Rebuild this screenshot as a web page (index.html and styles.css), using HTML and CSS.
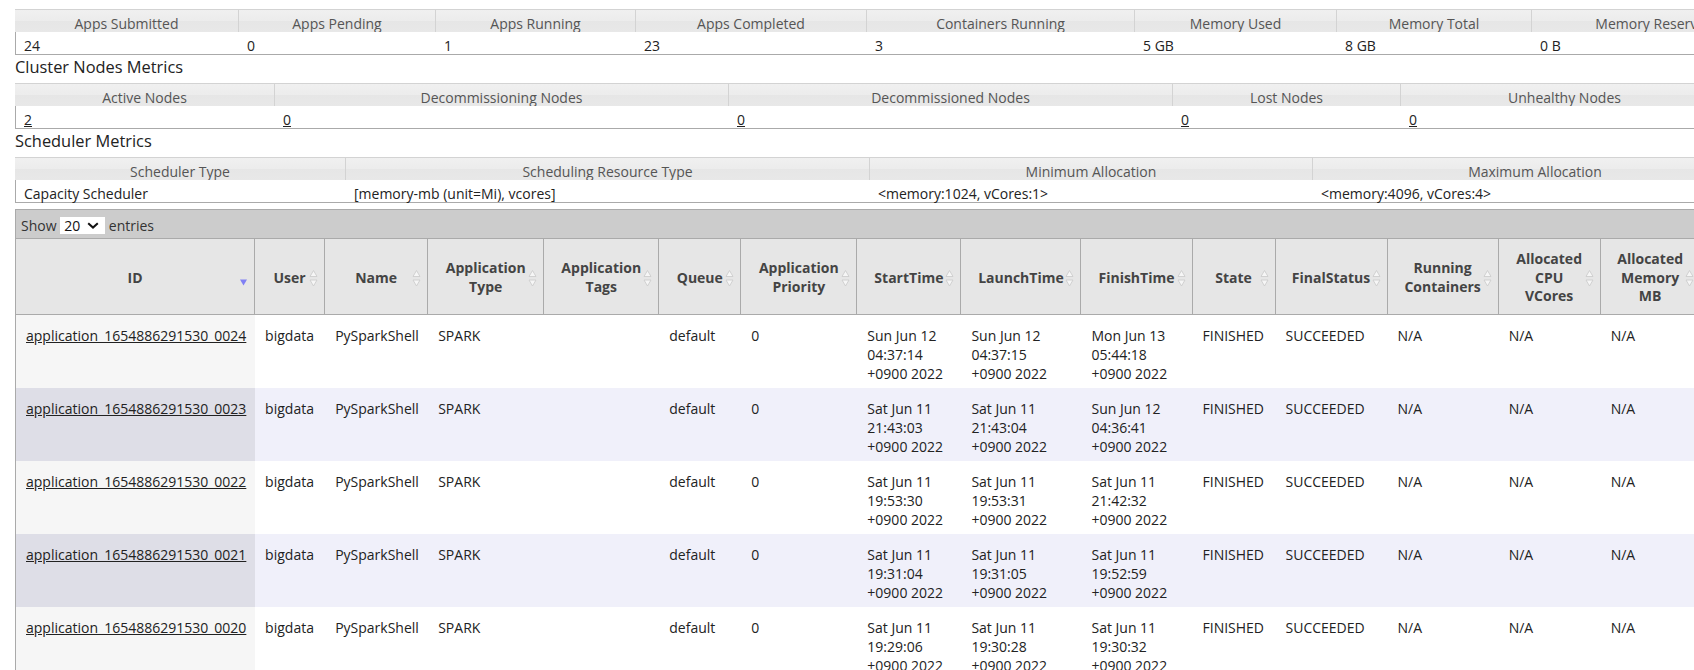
FILE: index.html
```html
<!DOCTYPE html>
<html>
<head>
<meta charset="utf-8">
<title>All Applications</title>
<link rel="stylesheet" href="styles.css">
</head>
<body>
<div class="page">
  <table class="metrics m-apps">
    <colgroup><col><col><col><col><col><col><col><col><col><col><col></colgroup>
    <thead>
      <tr>
        <th>Apps Submitted</th><th>Apps Pending</th><th>Apps Running</th><th>Apps Completed</th><th>Containers Running</th><th>Memory Used</th><th>Memory Total</th><th>Memory Reserved</th><th>VCores Used</th><th>VCores Total</th><th>VCores Reserved</th>
      </tr>
    </thead>
    <tbody>
      <tr>
        <td>24</td><td>0</td><td>1</td><td>23</td><td>3</td><td>5 GB</td><td>8 GB</td><td>0 B</td><td>3</td><td>16</td><td>0</td>
      </tr>
    </tbody>
  </table>

  <h3 class="section-title">Cluster Nodes Metrics</h3>
  <table class="metrics m-nodes">
    <colgroup><col><col><col><col><col><col><col></colgroup>
    <thead>
      <tr>
        <th>Active Nodes</th><th>Decommissioning Nodes</th><th>Decommissioned Nodes</th><th>Lost Nodes</th><th>Unhealthy Nodes</th><th>Rebooted Nodes</th><th>Shutdown Nodes</th>
      </tr>
    </thead>
    <tbody>
      <tr>
        <td><a href="#">2</a></td><td><a href="#">0</a></td><td><a href="#">0</a></td><td><a href="#">0</a></td><td><a href="#">0</a></td><td><a href="#">0</a></td><td><a href="#">0</a></td>
      </tr>
    </tbody>
  </table>

  <h3 class="section-title">Scheduler Metrics</h3>
  <table class="metrics m-sched">
    <colgroup><col><col><col><col><col></colgroup>
    <thead>
      <tr>
        <th>Scheduler Type</th><th>Scheduling Resource Type</th><th>Minimum Allocation</th><th>Maximum Allocation</th><th>Maximum Cluster Application Priority</th>
      </tr>
    </thead>
    <tbody>
      <tr>
        <td>Capacity Scheduler</td><td>[memory-mb (unit=Mi), vcores]</td><td>&lt;memory:1024, vCores:1&gt;</td><td>&lt;memory:4096, vCores:4&gt;</td><td>0</td>
      </tr>
    </tbody>
  </table>

  <div class="dt-wrapper">
    <div class="dt-toolbar">
      <label>Show <span class="len-wrap"><select class="len"><option>20</option><option>40</option><option>60</option></select><svg class="chev" width="12" height="7" viewBox="0 0 12 7"><path d="M1.2 1.2 L6 5.6 L10.8 1.2" fill="none" stroke="#111" stroke-width="2"/></svg></span> entries</label>
    </div>
    <table class="apps">
      <colgroup><col><col><col><col><col><col><col><col><col><col><col><col><col><col><col><col><col><col><col><col></colgroup>
      <thead>
        <tr>
          <th>ID<svg class="sort" width="9" height="19" viewBox="0 0 9 19"><path d="M1 10.5 H8 L4.5 16.5 Z" fill="#8080f4"/></svg></th>
          <th>User<svg class="sort" width="9" height="19" viewBox="0 0 9 19"><path d="M4.5 1.5 L8 7.5 H1 Z M1 11 H8 L4.5 17 Z" fill="#f6f6f6" stroke="#c9c9c9" stroke-width="0.8"/></svg></th>
          <th>Name<svg class="sort" width="9" height="19" viewBox="0 0 9 19"><path d="M4.5 1.5 L8 7.5 H1 Z M1 11 H8 L4.5 17 Z" fill="#f6f6f6" stroke="#c9c9c9" stroke-width="0.8"/></svg></th>
          <th>Application Type<svg class="sort" width="9" height="19" viewBox="0 0 9 19"><path d="M4.5 1.5 L8 7.5 H1 Z M1 11 H8 L4.5 17 Z" fill="#f6f6f6" stroke="#c9c9c9" stroke-width="0.8"/></svg></th>
          <th>Application Tags<svg class="sort" width="9" height="19" viewBox="0 0 9 19"><path d="M4.5 1.5 L8 7.5 H1 Z M1 11 H8 L4.5 17 Z" fill="#f6f6f6" stroke="#c9c9c9" stroke-width="0.8"/></svg></th>
          <th>Queue<svg class="sort" width="9" height="19" viewBox="0 0 9 19"><path d="M4.5 1.5 L8 7.5 H1 Z M1 11 H8 L4.5 17 Z" fill="#f6f6f6" stroke="#c9c9c9" stroke-width="0.8"/></svg></th>
          <th>Application Priority<svg class="sort" width="9" height="19" viewBox="0 0 9 19"><path d="M4.5 1.5 L8 7.5 H1 Z M1 11 H8 L4.5 17 Z" fill="#f6f6f6" stroke="#c9c9c9" stroke-width="0.8"/></svg></th>
          <th>StartTime<svg class="sort" width="9" height="19" viewBox="0 0 9 19"><path d="M4.5 1.5 L8 7.5 H1 Z M1 11 H8 L4.5 17 Z" fill="#f6f6f6" stroke="#c9c9c9" stroke-width="0.8"/></svg></th>
          <th>LaunchTime<svg class="sort" width="9" height="19" viewBox="0 0 9 19"><path d="M4.5 1.5 L8 7.5 H1 Z M1 11 H8 L4.5 17 Z" fill="#f6f6f6" stroke="#c9c9c9" stroke-width="0.8"/></svg></th>
          <th>FinishTime<svg class="sort" width="9" height="19" viewBox="0 0 9 19"><path d="M4.5 1.5 L8 7.5 H1 Z M1 11 H8 L4.5 17 Z" fill="#f6f6f6" stroke="#c9c9c9" stroke-width="0.8"/></svg></th>
          <th>State<svg class="sort" width="9" height="19" viewBox="0 0 9 19"><path d="M4.5 1.5 L8 7.5 H1 Z M1 11 H8 L4.5 17 Z" fill="#f6f6f6" stroke="#c9c9c9" stroke-width="0.8"/></svg></th>
          <th>FinalStatus<svg class="sort" width="9" height="19" viewBox="0 0 9 19"><path d="M4.5 1.5 L8 7.5 H1 Z M1 11 H8 L4.5 17 Z" fill="#f6f6f6" stroke="#c9c9c9" stroke-width="0.8"/></svg></th>
          <th>Running Containers<svg class="sort" width="9" height="19" viewBox="0 0 9 19"><path d="M4.5 1.5 L8 7.5 H1 Z M1 11 H8 L4.5 17 Z" fill="#f6f6f6" stroke="#c9c9c9" stroke-width="0.8"/></svg></th>
          <th>Allocated CPU VCores<svg class="sort" width="9" height="19" viewBox="0 0 9 19"><path d="M4.5 1.5 L8 7.5 H1 Z M1 11 H8 L4.5 17 Z" fill="#f6f6f6" stroke="#c9c9c9" stroke-width="0.8"/></svg></th>
          <th>Allocated Memory MB<svg class="sort" width="9" height="19" viewBox="0 0 9 19"><path d="M4.5 1.5 L8 7.5 H1 Z M1 11 H8 L4.5 17 Z" fill="#f6f6f6" stroke="#c9c9c9" stroke-width="0.8"/></svg></th>
          <th>% of Queue</th>
          <th>% of Cluster</th>
          <th>Progress</th>
          <th>Tracking UI</th>
          <th>Blacklisted Nodes</th>
        </tr>
      </thead>
      <tbody>
        <tr class="odd">
          <td class="sorted"><a href="#">application_1654886291530_0024</a></td><td>bigdata</td><td>PySparkShell</td><td>SPARK</td><td></td><td>default</td><td>0</td>
          <td>Sun Jun 12 04:37:14 +0900 2022</td><td>Sun Jun 12 04:37:15 +0900 2022</td><td>Mon Jun 13 05:44:18 +0900 2022</td>
          <td>FINISHED</td><td>SUCCEEDED</td><td>N/A</td><td>N/A</td><td>N/A</td><td>0.0</td><td>0.0</td><td></td><td><a href="#">History</a></td><td>N/A</td>
        </tr>
        <tr class="even">
          <td class="sorted"><a href="#">application_1654886291530_0023</a></td><td>bigdata</td><td>PySparkShell</td><td>SPARK</td><td></td><td>default</td><td>0</td>
          <td>Sat Jun 11 21:43:03 +0900 2022</td><td>Sat Jun 11 21:43:04 +0900 2022</td><td>Sun Jun 12 04:36:41 +0900 2022</td>
          <td>FINISHED</td><td>SUCCEEDED</td><td>N/A</td><td>N/A</td><td>N/A</td><td>0.0</td><td>0.0</td><td></td><td><a href="#">History</a></td><td>N/A</td>
        </tr>
        <tr class="odd">
          <td class="sorted"><a href="#">application_1654886291530_0022</a></td><td>bigdata</td><td>PySparkShell</td><td>SPARK</td><td></td><td>default</td><td>0</td>
          <td>Sat Jun 11 19:53:30 +0900 2022</td><td>Sat Jun 11 19:53:31 +0900 2022</td><td>Sat Jun 11 21:42:32 +0900 2022</td>
          <td>FINISHED</td><td>SUCCEEDED</td><td>N/A</td><td>N/A</td><td>N/A</td><td>0.0</td><td>0.0</td><td></td><td><a href="#">History</a></td><td>N/A</td>
        </tr>
        <tr class="even">
          <td class="sorted"><a href="#">application_1654886291530_0021</a></td><td>bigdata</td><td>PySparkShell</td><td>SPARK</td><td></td><td>default</td><td>0</td>
          <td>Sat Jun 11 19:31:04 +0900 2022</td><td>Sat Jun 11 19:31:05 +0900 2022</td><td>Sat Jun 11 19:52:59 +0900 2022</td>
          <td>FINISHED</td><td>SUCCEEDED</td><td>N/A</td><td>N/A</td><td>N/A</td><td>0.0</td><td>0.0</td><td></td><td><a href="#">History</a></td><td>N/A</td>
        </tr>
        <tr class="odd">
          <td class="sorted"><a href="#">application_1654886291530_0020</a></td><td>bigdata</td><td>PySparkShell</td><td>SPARK</td><td></td><td>default</td><td>0</td>
          <td>Sat Jun 11 19:29:06 +0900 2022</td><td>Sat Jun 11 19:30:28 +0900 2022</td><td>Sat Jun 11 19:30:32 +0900 2022</td>
          <td>FINISHED</td><td>SUCCEEDED</td><td>N/A</td><td>N/A</td><td>N/A</td><td>0.0</td><td>0.0</td><td></td><td><a href="#">History</a></td><td>N/A</td>
        </tr>
      </tbody>
    </table>
  </div>
</div>
</body>
</html>
```

FILE: styles.css
```css
html, body {
  margin: 0;
  padding: 0;
  overflow: hidden;
  background: #ffffff;
}

body {
  font-family: "Open Sans", "Noto Sans", "Liberation Sans", sans-serif;
  font-size: 14px;
  color: #222222;
}

.page {
  padding: 9px 0 0 15px;
}

a {
  color: #222222;
  text-decoration: underline;
}

table {
  border-collapse: separate;
  border-spacing: 0;
  table-layout: fixed;
}

th, td {
  box-sizing: border-box;
}

/* ---------- metrics tables ---------- */
.metrics th {
  font-weight: normal;
  color: #555555;
  text-align: center;
  white-space: nowrap;
  overflow: hidden;
  line-height: 17px;
  padding: 4px 8px 0;
  height: 23px;
  border-top: 1px solid #d3d3d3;
  border-right: 1px solid #d3d3d3;
  background: linear-gradient(#f0f0f0 0%, #ececec 50%, #e6e6e6 51%, #e8e8e8 100%);
}

.metrics td {
  text-align: left;
  white-space: nowrap;
  line-height: 17px;
  padding: 5px 8px 0;
  height: 22px;
  border-bottom: 1px solid #aaaaaa;
  background: #ffffff;
}

.metrics td:first-child {
  border-left: 1px solid #aaaaaa;
}

.m-apps { width: 2363px; }
.m-apps col:nth-child(1) { width: 224px; }
.m-apps col:nth-child(2) { width: 197px; }
.m-apps col:nth-child(3) { width: 200px; }
.m-apps col:nth-child(4) { width: 231px; }
.m-apps col:nth-child(5) { width: 268px; }
.m-apps col:nth-child(6) { width: 202px; }
.m-apps col:nth-child(7) { width: 195px; }
.m-apps col:nth-child(8) { width: 246px; }
.m-apps col:nth-child(9) { width: 200px; }
.m-apps col:nth-child(10) { width: 200px; }
.m-apps col:nth-child(11) { width: 200px; }

.m-nodes { width: 2214px; }
.m-nodes col:nth-child(1) { width: 260px; }
.m-nodes col:nth-child(2) { width: 454px; }
.m-nodes col:nth-child(3) { width: 444px; }
.m-nodes col:nth-child(4) { width: 228px; }
.m-nodes col:nth-child(5) { width: 328px; }
.m-nodes col:nth-child(6) { width: 250px; }
.m-nodes col:nth-child(7) { width: 250px; }

.m-sched { width: 2043px; }
.m-sched col:nth-child(1) { width: 331px; }
.m-sched col:nth-child(2) { width: 524px; }
.m-sched col:nth-child(3) { width: 443px; }
.m-sched col:nth-child(4) { width: 445px; }
.m-sched col:nth-child(5) { width: 300px; }

.m-sched td {
  height: 23px;
}

.section-title {
  margin: 1px 0 5px;
  font-size: 16.4px;
  line-height: 22px;
  font-weight: normal;
  color: #222222;
}

/* ---------- applications data table ---------- */
.dt-wrapper {
  margin-top: 6px;
  border-left: 1px solid #aaaaaa;
  width: max-content;
}

.dt-toolbar {
  background: #cccccc;
  border-top: 1px solid #aaaaaa;
  padding: 6px 5px 3px;
  line-height: 19px;
  color: #333333;
}

.len-wrap {
  position: relative;
  display: inline-block;
  vertical-align: top;
  margin-top: 1px;
  width: 45px;
  height: 17px;
  background: #ffffff;
}

.len {
  appearance: none;
  -webkit-appearance: none;
  display: block;
  width: 45px;
  height: 17px;
  margin: 0;
  padding: 0 0 0 4px;
  border: 0;
  outline: none;
  background: transparent;
  font-family: inherit;
  font-size: 14px;
  line-height: 17px;
  color: #111111;
}

.chev {
  position: absolute;
  right: 6px;
  top: 5px;
}

.apps { width: 2185px; }
.apps col:nth-child(1) { width: 239px; }
.apps col:nth-child(2) { width: 70px; }
.apps col:nth-child(3) { width: 103px; }
.apps col:nth-child(4) { width: 116px; }
.apps col:nth-child(5) { width: 115px; }
.apps col:nth-child(6) { width: 82px; }
.apps col:nth-child(7) { width: 116px; }
.apps col:nth-child(8) { width: 104px; }
.apps col:nth-child(9) { width: 120px; }
.apps col:nth-child(10) { width: 111px; }
.apps col:nth-child(11) { width: 83px; }
.apps col:nth-child(12) { width: 112px; }
.apps col:nth-child(13) { width: 111px; }
.apps col:nth-child(14) { width: 102px; }
.apps col:nth-child(15) { width: 100px; }
.apps col:nth-child(16) { width: 90px; }
.apps col:nth-child(17) { width: 90px; }
.apps col:nth-child(18) { width: 110px; }
.apps col:nth-child(19) { width: 110px; }
.apps col:nth-child(20) { width: 100px; }

.apps th {
  position: relative;
  height: 77px;
  padding: 3px 14px 0;
  font-weight: bold;
  color: #444444;
  line-height: 18.7px;
  text-align: center;
  vertical-align: middle;
  background: #e6e6e6;
  border-top: 1px solid #aaaaaa;
  border-right: 1px solid #aaaaaa;
  border-bottom: 1px solid #aaaaaa;
}

.apps .sort {
  position: absolute;
  right: 6px;
  top: 50%;
  margin-top: -8px;
}

.apps td {
  padding: 11px 14px 5px 10px;
  line-height: 19px;
  vertical-align: top;
  text-align: left;
  color: #222222;
}

.apps td.sorted {
  white-space: nowrap;
}

.apps tr.odd td { background: #ffffff; }
.apps tr.odd td.sorted { background: #f6f6f6; }
.apps tr.even td { background: #f0f0fa; }
.apps tr.even td.sorted { background: #dedee7; }
```
